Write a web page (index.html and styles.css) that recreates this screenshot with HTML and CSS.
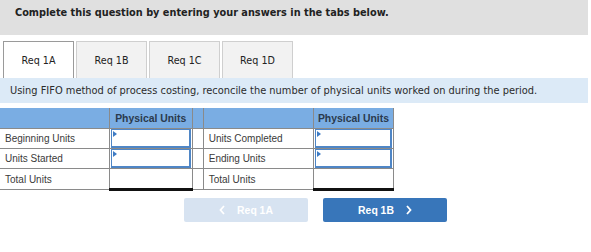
FILE: index.html
```html
<!DOCTYPE html>
<html lang="en">
<head>
    <meta charset="UTF-8">
    <title>Physical Units</title>
    <link rel="stylesheet" href="styles.css">
</head>
<body>
    <header class="banner">Complete this question by entering your answers in the tabs below.</header>
    <nav class="tabs">
        <button class="tab active">Req 1A</button>
        <button class="tab">Req 1B</button>
        <button class="tab">Req 1C</button>
        <button class="tab">Req 1D</button>
    </nav>
    <p class="prompt">Using FIFO method of process costing, reconcile the number of physical units worked on during the period.</p>
    <table class="units">
        <colgroup>
            <col class="c-label"><col class="c-input"><col class="c-gap"><col class="c-label2"><col class="c-input2">
        </colgroup>
        <thead>
            <tr>
                <th></th><th>Physical Units</th><th></th><th></th><th>Physical Units</th>
            </tr>
        </thead>
        <tbody>
            <tr>
                <td>Beginning Units</td><td class="entry"><span class="box"></span></td><td></td>
                <td>Units Completed</td><td class="entry"><span class="box"></span></td>
            </tr>
            <tr>
                <td>Units Started</td><td class="entry"><span class="box"></span></td><td></td>
                <td>Ending Units</td><td class="entry"><span class="box"></span></td>
            </tr>
            <tr>
                <td>Total Units</td><td class="total"></td><td></td>
                <td>Total Units</td><td class="total"></td>
            </tr>
        </tbody>
    </table>
    <div class="pager">
        <button class="nav-btn prev">
            <svg class="chev" width="6" height="10" viewBox="0 0 6 10"><path d="M5 1 L1.5 5 L5 9" fill="none" stroke="#fff" stroke-width="1.8"/></svg>
            <span>Req 1A</span>
        </button>
        <button class="nav-btn next">
            <span>Req 1B</span>
            <svg class="chev" width="6" height="10" viewBox="0 0 6 10"><path d="M1 1 L4.5 5 L1 9" fill="none" stroke="#fff" stroke-width="1.8"/></svg>
        </button>
    </div>
</body>
</html>
```

FILE: styles.css
```css
body {
    margin: 0;
    width: 591px;
    font-family: "DejaVu Sans", Verdana, sans-serif;
    color: #222;
}

.banner {
    background-color: #e0e0e0;
    height: 35px;
    box-sizing: border-box;
    padding: 7px 0 0 15px;
    font-size: 9.75px;
    font-weight: bold;
    margin-right: 3px;
}

.tabs {
    display: flex;
    gap: 2px;
    padding: 6px 0 0 3px;
    height: 37px;
}

.tab {
    width: 71px;
    height: 37px;
    margin: 0;
    background-color: #f2f2f2;
    border: 1px solid #cfcfcf;
    border-bottom: none;
    font-family: "DejaVu Sans", Verdana, sans-serif;
    font-size: 9.6px;
    color: #222;
    padding: 0;
}

.tab.active {
    background-color: #fff;
    border-color: #9a9a9a;
}

.prompt {
    margin: 0 3px 0 0;
    height: 25px;
    box-sizing: border-box;
    background-color: #dceaf7;
    padding: 7px 0 0 10px;
    font-size: 9.85px;
    color: #2b2b2b;
}

.units {
    margin-top: 5px;
    border-collapse: collapse;
    table-layout: fixed;
    width: 394px;
    font-family: "Liberation Sans", Arial, sans-serif;
    font-size: 10px;
}

.c-label { width: 109px; }
.c-input { width: 83px; }
.c-gap { width: 11px; }
.c-label2 { width: 110px; }
.c-input2 { width: 80px; }

.units th {
    background-color: #7aade3;
    height: 20px;
    padding: 0;
    font-weight: bold;
    font-size: 10.4px;
    color: #2a3a4d;
    border-left: 1px solid #8a8a8a;
    border-right: 1px solid #8a8a8a;
    border-bottom: 1px solid #8a8a8a;
}

.units th:first-child {
    border-left: none;
}

.units td {
    height: 19px;
    padding: 0 0 0 5px;
    border: 1px solid #8a8a8a;
    color: #3a3a3a;
    white-space: nowrap;
}

.units td:first-child {
    border-left: none;
}

.units td.entry {
    padding: 0;
}

.box {
    display: block;
    height: 19px;
    margin: 0 1px;
    border: 1px solid #4f86c6;
    border-width: 1px 2px 2px 1px;
    box-sizing: border-box;
    position: relative;
    background-color: #fff;
}

.box::before {
    content: "";
    position: absolute;
    top: 1px;
    left: 1px;
    border-top: 3px solid transparent;
    border-bottom: 3px solid transparent;
    border-left: 4px solid #3d7bc4;
}

.units td.total {
    padding: 0;
    border-top: 1px solid #111;
    border-bottom: 3px solid #111;
}

.pager {
    display: flex;
    gap: 15px;
    padding: 7px 0 0 184px;
}

.nav-btn {
    width: 124px;
    height: 24px;
    border: none;
    border-radius: 2px;
    font-family: "Liberation Sans", Arial, sans-serif;
    font-size: 10.4px;
    font-weight: bold;
    color: #fff;
    padding: 0;
    display: flex;
    align-items: center;
    justify-content: center;
    gap: 12px;
}

.nav-btn.prev {
    background-color: #d7e3f1;
}

.nav-btn.next {
    background-color: #3876ba;
}
```
